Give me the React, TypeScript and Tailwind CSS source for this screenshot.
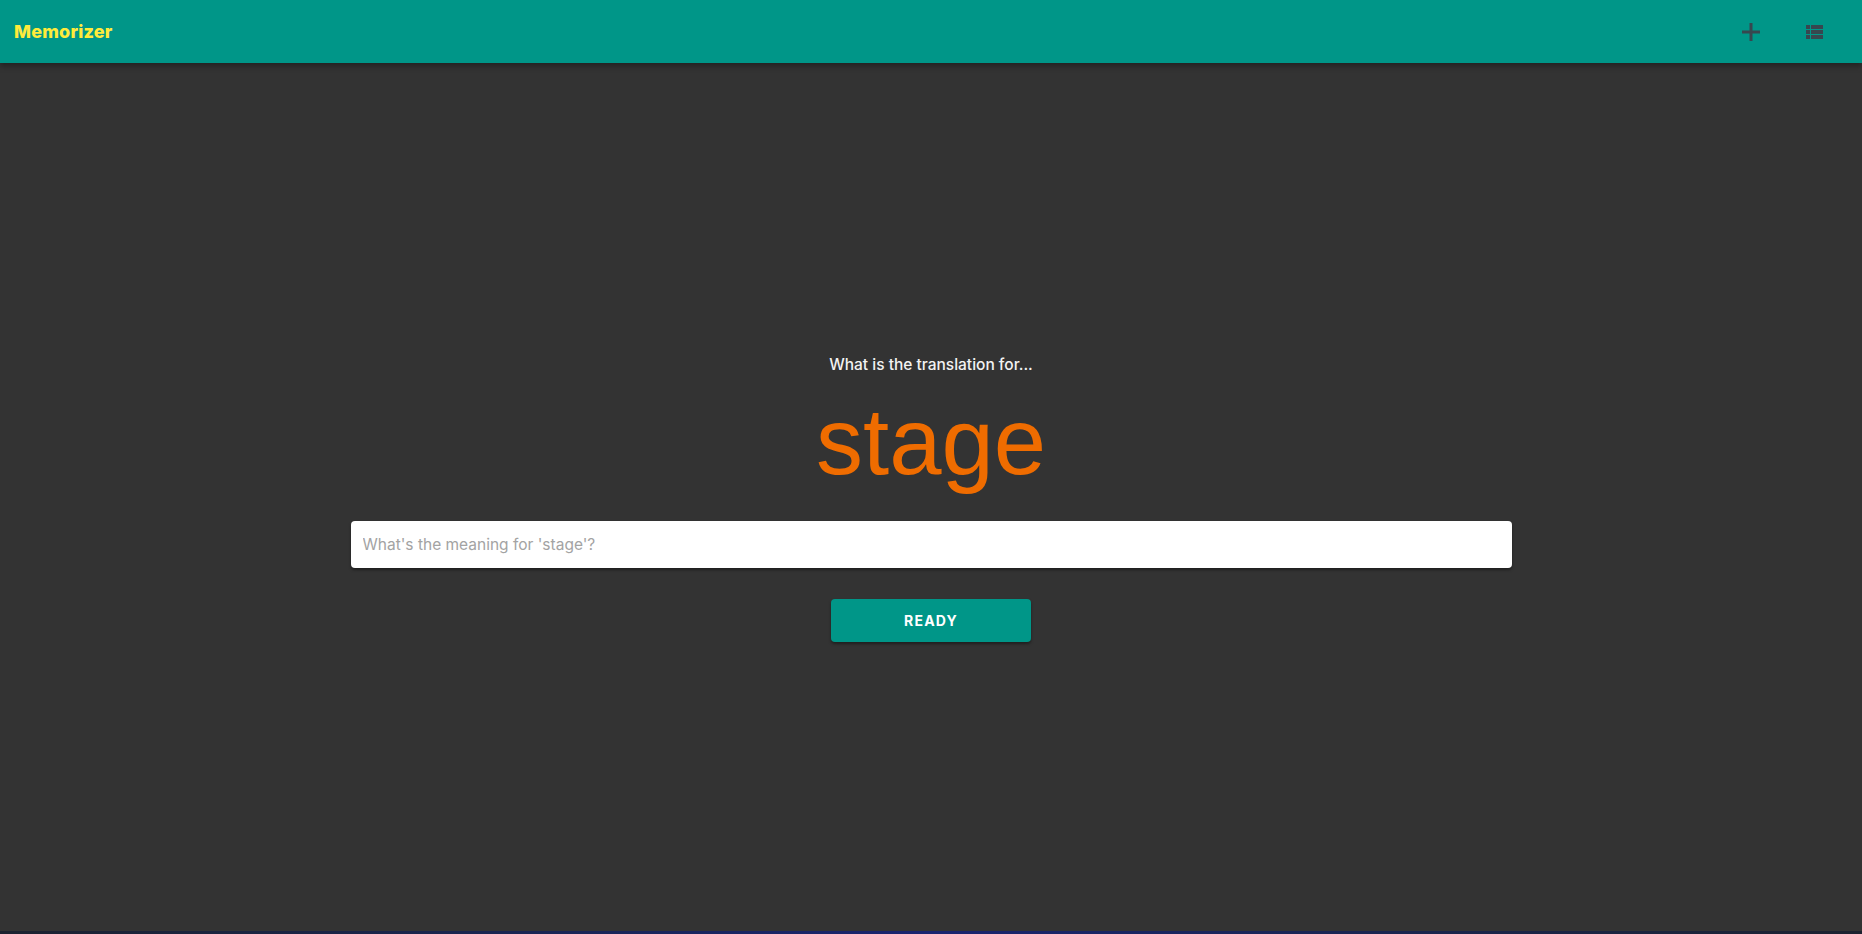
import { useState } from "react";

const font = { fontFamily: "Inter, 'Noto Sans', sans-serif" };

function PlusIcon() {
  return (
    <svg width="20" height="20" viewBox="0 0 20 20" fill="none">
      <path d="M10 1v18M1 10h18" stroke="#37474f" strokeWidth="3" />
    </svg>
  );
}

function ListIcon() {
  return (
    <svg width="24" height="24" viewBox="0 0 24 24" fill="#37474f">
      <path d="M4 14h4v-4H4v4zm0 5h4v-4H4v4zM4 9h4V5H4v4zm5 5h12v-4H9v4zm0 5h12v-4H9v4zM9 5v4h12V5H9z" />
    </svg>
  );
}

export default function App() {
  const [answer, setAnswer] = useState("");
  const word = "stage";

  return (
    <div className="flex flex-col h-[934px] bg-[#333333] overflow-hidden" style={font}>
      <header className="relative z-10 flex items-center justify-between h-[63px] bg-[#009688] shadow-[0_3px_6px_rgba(0,0,0,0.35)] pl-[14px] pr-[36px]">
        <span className="text-[18px] font-extrabold text-[#ffeb3b] tracking-[0.2px]">Memorizer</span>
        <div className="flex items-center gap-[41px]">
          <button className="flex items-center justify-center"><PlusIcon /></button>
          <button className="flex items-center justify-center"><ListIcon /></button>
        </div>
      </header>

      <main className="flex-1 flex flex-col items-center pt-[292px]">
        <p className="text-[15.5px] leading-[20px] font-medium text-[#f2f2f2]">What is the translation for...</p>
        <h1 className="mt-[20px] text-[94px] leading-none text-[#ef6c00]" style={{ fontFamily: "'Liberation Sans', Arial, sans-serif" }}>
          {word}
        </h1>
        <input
          value={answer}
          onChange={(e) => setAnswer(e.target.value)}
          placeholder={`What's the meaning for '${word}'?`}
          className="mt-[32px] w-[1161px] h-[47px] rounded-[4px] bg-white px-[12px] text-[15.5px] text-[#333] placeholder:text-[#a3a3a3] shadow-[0_2px_3px_rgba(0,0,0,0.4)] outline-none"
        />
        <button className="mt-[31px] w-[200px] h-[43px] rounded-[4px] bg-[#009688] text-white text-[14px] font-bold tracking-[1.2px] shadow-[0_2px_3px_rgba(0,0,0,0.4)]">
          READY
        </button>
      </main>

      <div className="h-[3px] bg-gradient-to-r from-[#1c2230] via-[#1a2470] to-[#1c2230]" />
    </div>
  );
}
